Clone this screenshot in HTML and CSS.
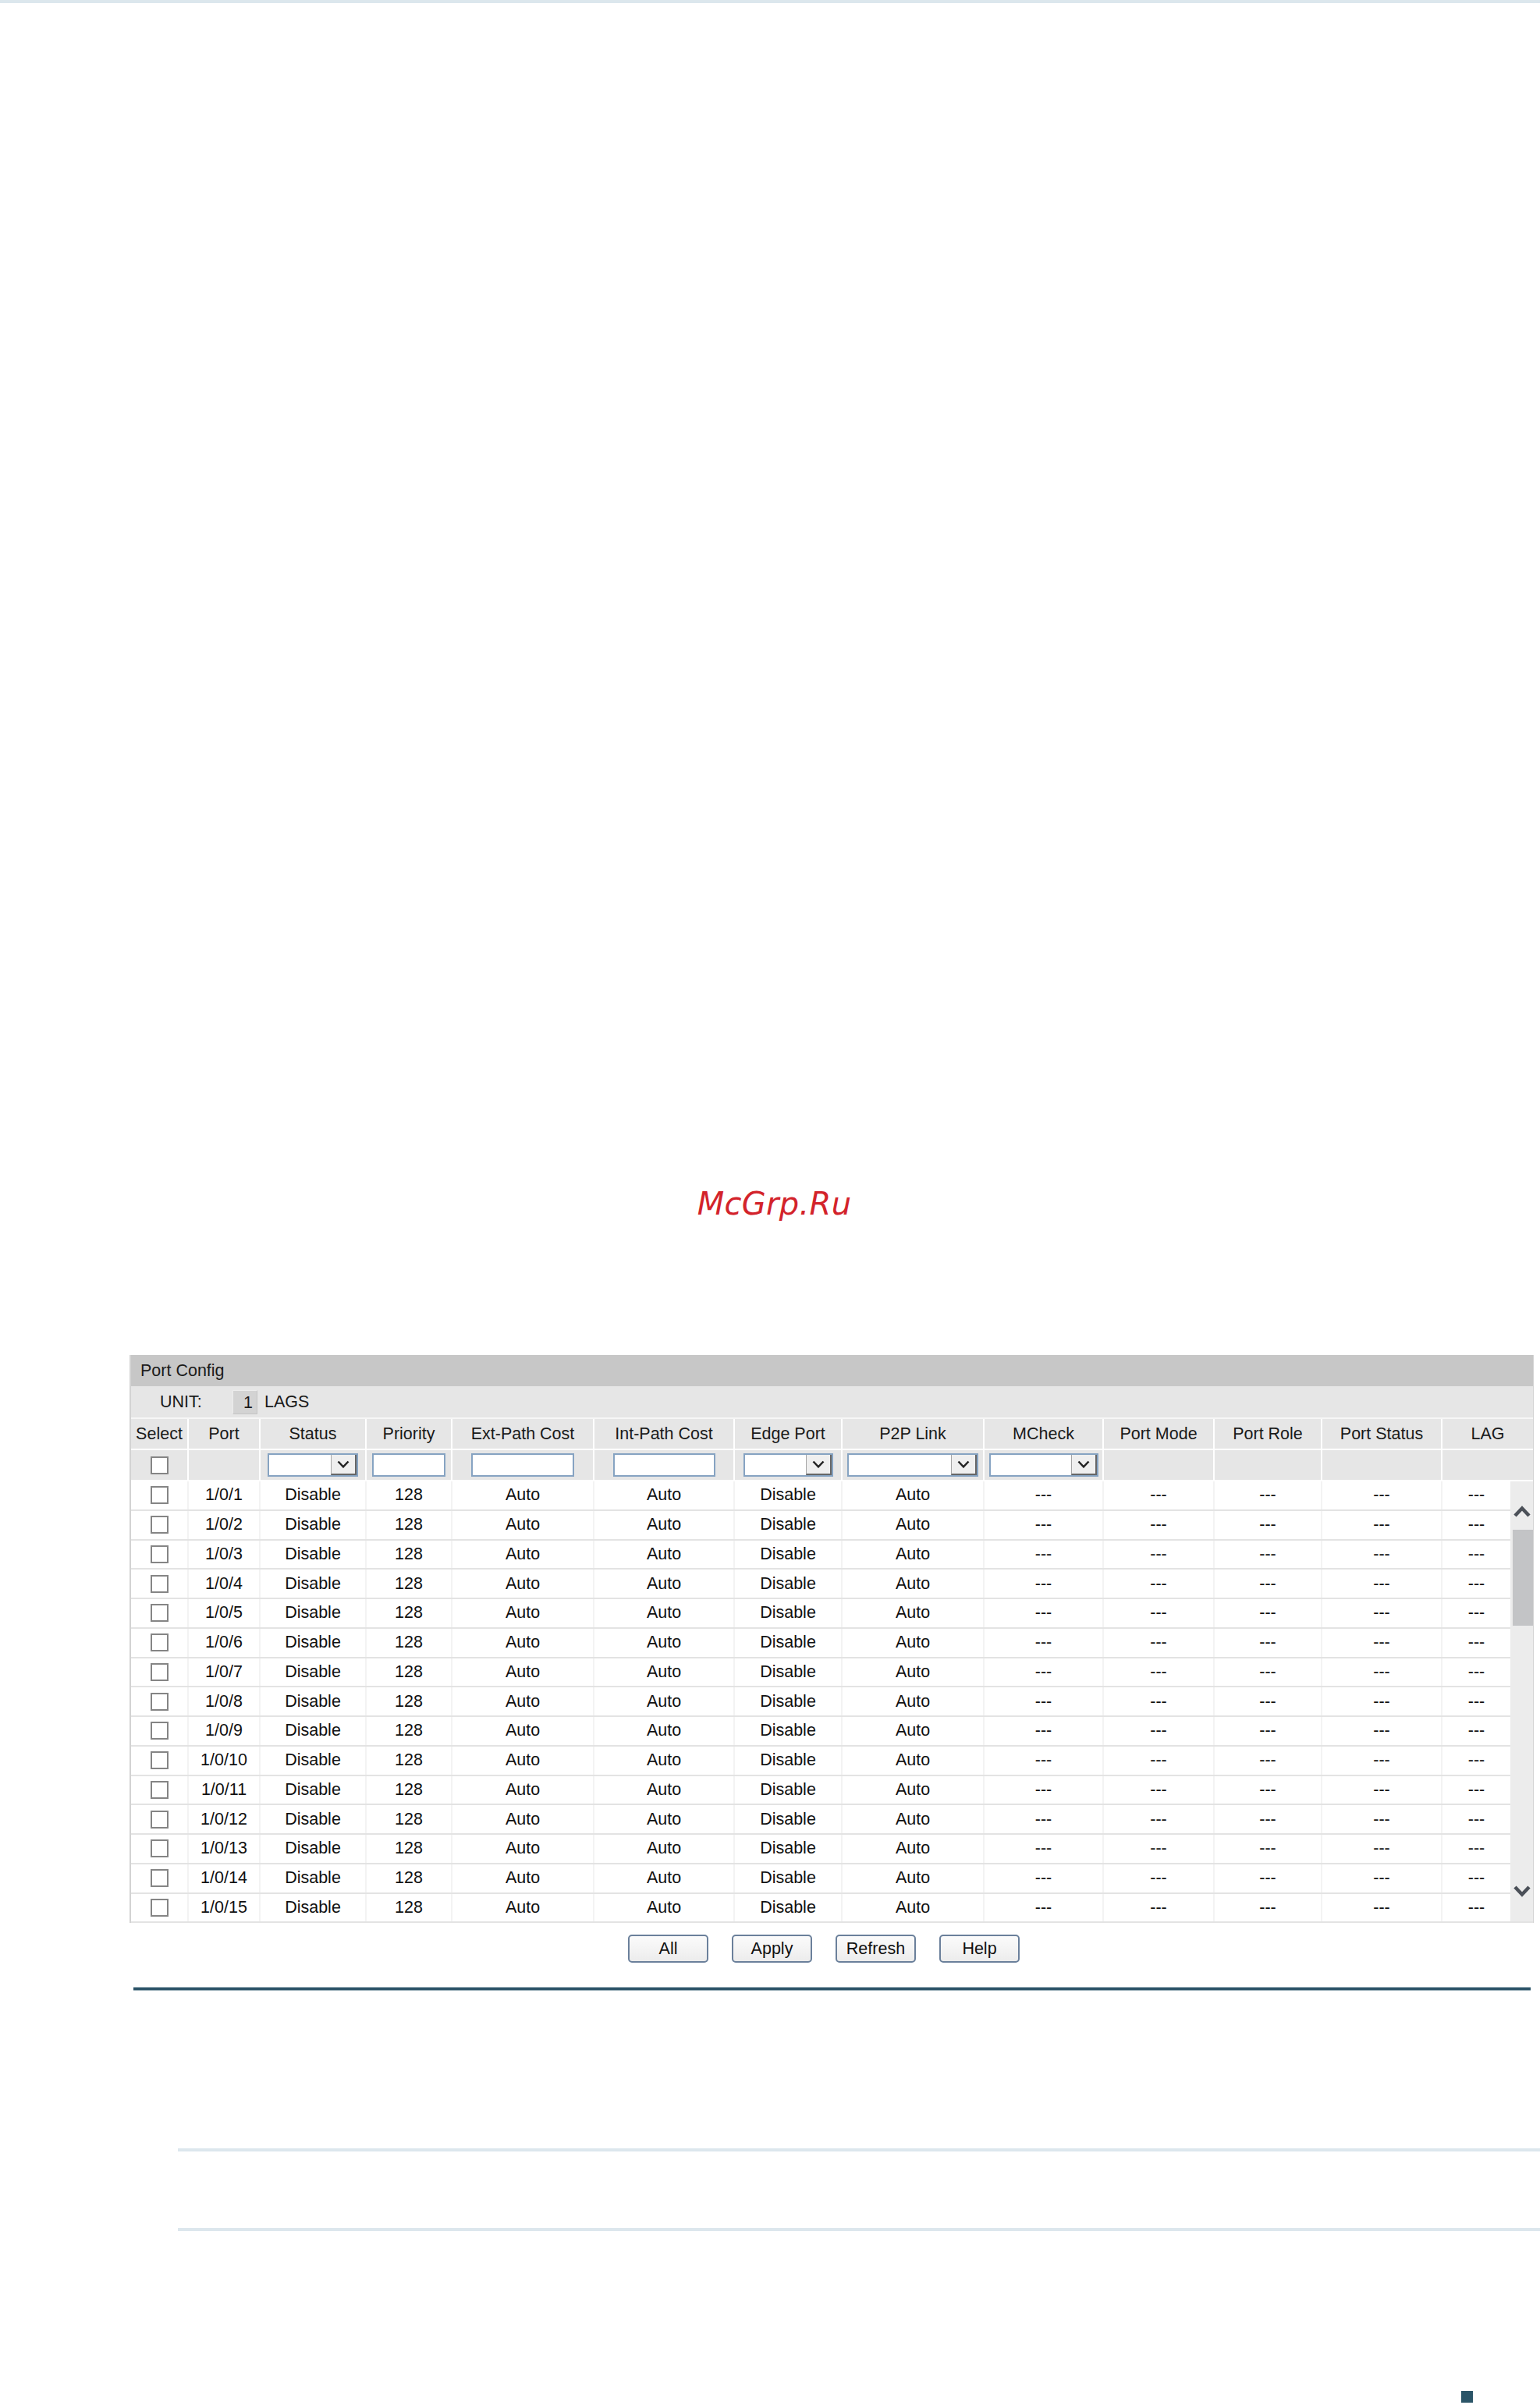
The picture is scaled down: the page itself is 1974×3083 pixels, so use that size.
FILE: index.html
```html
<!DOCTYPE html>
<html>
<head>
<meta charset="utf-8">
<title>Port Config</title>
<link rel="stylesheet" href="styles.css">
</head>
<body>
<div class="topbar"></div>
<div class="brand">McGrp.Ru</div>

<div class="panel">
  <div class="title">Port Config</div>
  <div class="unit-row">
    <span class="unit-label">UNIT:</span>
    <span class="unit-box">1</span>
    <span class="unit-lags">LAGS</span>
  </div>
  <div class="hrow head">
    <div class="c">Select</div><div class="c">Port</div><div class="c">Status</div><div class="c">Priority</div><div class="c">Ext-Path Cost</div><div class="c">Int-Path Cost</div><div class="c">Edge Port</div><div class="c">P2P Link</div><div class="c">MCheck</div><div class="c">Port Mode</div><div class="c">Port Role</div><div class="c">Port Status</div><div class="c">LAG</div>
  </div>
  <div class="hrow filter">
    <div class="c"><span class="chk"></span></div>
    <div class="c"></div>
    <div class="c"><span class="sel w116"><span class="sel-btn"><svg width="16" height="10" viewBox="0 0 16 10"><polyline points="1.5,1.5 8,8.3 14.5,1.5" fill="none" stroke="#222" stroke-width="2.5"/></svg></span></span></div>
    <div class="c"><span class="inp w94"></span></div>
    <div class="c"><span class="inp w132"></span></div>
    <div class="c"><span class="inp w131"></span></div>
    <div class="c"><span class="sel w115"><span class="sel-btn"><svg width="16" height="10" viewBox="0 0 16 10"><polyline points="1.5,1.5 8,8.3 14.5,1.5" fill="none" stroke="#222" stroke-width="2.5"/></svg></span></span></div>
    <div class="c"><span class="sel w168"><span class="sel-btn"><svg width="16" height="10" viewBox="0 0 16 10"><polyline points="1.5,1.5 8,8.3 14.5,1.5" fill="none" stroke="#222" stroke-width="2.5"/></svg></span></span></div>
    <div class="c"><span class="sel w140"><span class="sel-btn"><svg width="16" height="10" viewBox="0 0 16 10"><polyline points="1.5,1.5 8,8.3 14.5,1.5" fill="none" stroke="#222" stroke-width="2.5"/></svg></span></span></div>
    <div class="c"></div><div class="c"></div><div class="c"></div><div class="c"></div>
  </div>

  <div class="body">
    <div class="rows">
      <div class="drow"><div class="c"><span class="chk"></span></div><div class="c">1/0/1</div><div class="c">Disable</div><div class="c">128</div><div class="c">Auto</div><div class="c">Auto</div><div class="c">Disable</div><div class="c">Auto</div><div class="c">---</div><div class="c">---</div><div class="c">---</div><div class="c">---</div><div class="c">---</div></div>
      <div class="drow"><div class="c"><span class="chk"></span></div><div class="c">1/0/2</div><div class="c">Disable</div><div class="c">128</div><div class="c">Auto</div><div class="c">Auto</div><div class="c">Disable</div><div class="c">Auto</div><div class="c">---</div><div class="c">---</div><div class="c">---</div><div class="c">---</div><div class="c">---</div></div>
      <div class="drow"><div class="c"><span class="chk"></span></div><div class="c">1/0/3</div><div class="c">Disable</div><div class="c">128</div><div class="c">Auto</div><div class="c">Auto</div><div class="c">Disable</div><div class="c">Auto</div><div class="c">---</div><div class="c">---</div><div class="c">---</div><div class="c">---</div><div class="c">---</div></div>
      <div class="drow"><div class="c"><span class="chk"></span></div><div class="c">1/0/4</div><div class="c">Disable</div><div class="c">128</div><div class="c">Auto</div><div class="c">Auto</div><div class="c">Disable</div><div class="c">Auto</div><div class="c">---</div><div class="c">---</div><div class="c">---</div><div class="c">---</div><div class="c">---</div></div>
      <div class="drow"><div class="c"><span class="chk"></span></div><div class="c">1/0/5</div><div class="c">Disable</div><div class="c">128</div><div class="c">Auto</div><div class="c">Auto</div><div class="c">Disable</div><div class="c">Auto</div><div class="c">---</div><div class="c">---</div><div class="c">---</div><div class="c">---</div><div class="c">---</div></div>
      <div class="drow"><div class="c"><span class="chk"></span></div><div class="c">1/0/6</div><div class="c">Disable</div><div class="c">128</div><div class="c">Auto</div><div class="c">Auto</div><div class="c">Disable</div><div class="c">Auto</div><div class="c">---</div><div class="c">---</div><div class="c">---</div><div class="c">---</div><div class="c">---</div></div>
      <div class="drow"><div class="c"><span class="chk"></span></div><div class="c">1/0/7</div><div class="c">Disable</div><div class="c">128</div><div class="c">Auto</div><div class="c">Auto</div><div class="c">Disable</div><div class="c">Auto</div><div class="c">---</div><div class="c">---</div><div class="c">---</div><div class="c">---</div><div class="c">---</div></div>
      <div class="drow"><div class="c"><span class="chk"></span></div><div class="c">1/0/8</div><div class="c">Disable</div><div class="c">128</div><div class="c">Auto</div><div class="c">Auto</div><div class="c">Disable</div><div class="c">Auto</div><div class="c">---</div><div class="c">---</div><div class="c">---</div><div class="c">---</div><div class="c">---</div></div>
      <div class="drow"><div class="c"><span class="chk"></span></div><div class="c">1/0/9</div><div class="c">Disable</div><div class="c">128</div><div class="c">Auto</div><div class="c">Auto</div><div class="c">Disable</div><div class="c">Auto</div><div class="c">---</div><div class="c">---</div><div class="c">---</div><div class="c">---</div><div class="c">---</div></div>
      <div class="drow"><div class="c"><span class="chk"></span></div><div class="c">1/0/10</div><div class="c">Disable</div><div class="c">128</div><div class="c">Auto</div><div class="c">Auto</div><div class="c">Disable</div><div class="c">Auto</div><div class="c">---</div><div class="c">---</div><div class="c">---</div><div class="c">---</div><div class="c">---</div></div>
      <div class="drow"><div class="c"><span class="chk"></span></div><div class="c">1/0/11</div><div class="c">Disable</div><div class="c">128</div><div class="c">Auto</div><div class="c">Auto</div><div class="c">Disable</div><div class="c">Auto</div><div class="c">---</div><div class="c">---</div><div class="c">---</div><div class="c">---</div><div class="c">---</div></div>
      <div class="drow"><div class="c"><span class="chk"></span></div><div class="c">1/0/12</div><div class="c">Disable</div><div class="c">128</div><div class="c">Auto</div><div class="c">Auto</div><div class="c">Disable</div><div class="c">Auto</div><div class="c">---</div><div class="c">---</div><div class="c">---</div><div class="c">---</div><div class="c">---</div></div>
      <div class="drow"><div class="c"><span class="chk"></span></div><div class="c">1/0/13</div><div class="c">Disable</div><div class="c">128</div><div class="c">Auto</div><div class="c">Auto</div><div class="c">Disable</div><div class="c">Auto</div><div class="c">---</div><div class="c">---</div><div class="c">---</div><div class="c">---</div><div class="c">---</div></div>
      <div class="drow"><div class="c"><span class="chk"></span></div><div class="c">1/0/14</div><div class="c">Disable</div><div class="c">128</div><div class="c">Auto</div><div class="c">Auto</div><div class="c">Disable</div><div class="c">Auto</div><div class="c">---</div><div class="c">---</div><div class="c">---</div><div class="c">---</div><div class="c">---</div></div>
      <div class="drow"><div class="c"><span class="chk"></span></div><div class="c">1/0/15</div><div class="c">Disable</div><div class="c">128</div><div class="c">Auto</div><div class="c">Auto</div><div class="c">Disable</div><div class="c">Auto</div><div class="c">---</div><div class="c">---</div><div class="c">---</div><div class="c">---</div><div class="c">---</div></div>
    </div>
    <div class="scroll">
      <svg class="arrow up" width="22" height="15" viewBox="0 0 22 15"><polyline points="2,13 11,3.5 20,13" fill="none" stroke="#4b5058" stroke-width="4.5"/></svg>
      <div class="thumb"></div>
      <div class="spacer"></div>
      <svg class="arrow down" width="22" height="15" viewBox="0 0 22 15"><polyline points="2,2 11,11.5 20,2" fill="none" stroke="#4b5058" stroke-width="4.5"/></svg>
    </div>
  </div>
</div>

<div class="actions">
  <button class="btn">All</button>
  <button class="btn">Apply</button>
  <button class="btn">Refresh</button>
  <button class="btn">Help</button>
</div>

<div class="rule-dark"></div>
<div class="rule-light first"></div>
<div class="rule-light second"></div>
<div class="corner"></div>
</body>
</html>
```
FILE: styles.css
```css
* { box-sizing: border-box; }

body {
  margin: 0;
  background: #ffffff;
  font-family: "Liberation Sans", Arial, sans-serif;
  color: #111;
}

.topbar {
  height: 4px;
  background: #dce7ed;
}

.brand {
  margin-top: 1516px;
  height: 46px;
  line-height: 46px;
  text-align: center;
  padding-left: 11px;
  font-family: "DejaVu Sans", sans-serif;
  font-style: oblique;
  font-size: 40px;
  color: #d3232b;
  letter-spacing: 0.3px;
}

.panel {
  margin: 171px 0 0 166px;
  width: 1800px;
  border-left: 2px solid #d3d3d3;
  border-right: 1px solid #d3d3d3;
  font-size: 21.5px;
}

.title {
  height: 40px;
  line-height: 40px;
  background: #c7c7c7;
  padding-left: 12px;
  color: #1a1a1a;
}

.unit-row {
  height: 40px;
  background: #e6e6e6;
  display: flex;
  align-items: center;
  padding-left: 37px;
  color: #1a1a1a;
}

.unit-label { width: 93px; }

.unit-box {
  width: 32px;
  height: 31px;
  line-height: 31px;
  background: #d3d3d3;
  border: 1px solid #c4c4c4;
  border-top-color: #ececec;
  border-left-color: #ececec;
  text-align: right;
  padding-right: 5px;
  margin-right: 9px;
}

.hrow, .drow {
  display: grid;
}

.hrow {
  grid-template-columns: 74px 92px 136px 110px 182px 180px 138px 182px 153px 142px 138px 154px 116px;
  height: 40px;
  background: #e6e6e6;
  border-top: 2px solid #f6f6f6;
}

.hrow .c {
  border-right: 2px solid #ffffff;
  display: flex;
  align-items: center;
  justify-content: center;
  color: #1a1a1a;
}

.hrow .c:last-child { border-right: none; }

.filter { border-top: 2px solid #ffffff; }

.body {
  display: flex;
  border-top: 2px solid #ffffff;
}

.rows { width: 1768px; }

.drow {
  grid-template-columns: 74px 92px 136px 110px 182px 180px 138px 182px 153px 142px 138px 154px 87px;
  height: 37.75px;
  border-bottom: 2px solid #e3e3e3;
  background: #ffffff;
}

.drow .c {
  border-right: 2px solid #f3f3f3;
  display: flex;
  align-items: center;
  justify-content: center;
  color: #111;
}

.drow .c:last-child { border-right: none; }

.chk {
  display: block;
  width: 23px;
  height: 23px;
  border: 2px solid #858585;
  background: #fff;
}

.inp, .sel {
  display: block;
  height: 30px;
  border: 2px solid #86a3c2;
  background: #fff;
}

.sel {
  display: flex;
  justify-content: flex-end;
}

.sel-btn {
  width: 33px;
  height: 26px;
  background: #efefef;
  border-left: 1px solid #a6a6a6;
  border-right: 2px solid #666;
  border-bottom: 2px solid #666;
  display: flex;
  align-items: center;
  justify-content: center;
}

.w94 { width: 94px; }
.w115 { width: 115px; }
.w116 { width: 116px; }
.w131 { width: 131px; }
.w132 { width: 132px; }
.w140 { width: 140px; }
.w168 { width: 168px; }

.scroll {
  width: 29px;
  background: #ececec;
  display: flex;
  flex-direction: column;
  align-items: center;
  padding: 31px 0 31px 0;
  border-bottom: 2px solid #e3e3e3;
}

.arrow { display: block; flex: none; }

.thumb {
  width: 26px;
  height: 123px;
  margin-top: 16px;
  margin-left: 2px;
  background: #c3c4c6;
}

.spacer { flex: 1; }

.actions {
  width: 1768px;
  margin: 15px 0 0 168px;
  padding-left: 8px;
  display: flex;
  justify-content: center;
  gap: 30px;
}

.btn {
  width: 103px;
  height: 36px;
  padding: 0;
  border: 2px solid #6b809b;
  border-radius: 5px;
  background: linear-gradient(#fbfbfb, #ececec);
  font-family: "Liberation Sans", Arial, sans-serif;
  font-size: 21.5px;
  color: #111;
}

.rule-dark {
  margin: 31px 0 0 171px;
  width: 1791px;
  height: 5px;
  background: linear-gradient(#9cb0ba 0, #9cb0ba 1px, #2e5569 1px, #2e5569 4px, #9cb0ba 4px);
}

.rule-light {
  margin-left: 228px;
  height: 4px;
  background: #dce7ed;
}

.rule-light.first { margin-top: 202px; }
.rule-light.second { margin-top: 98px; }

.corner {
  margin: 205px 0 0 1873px;
  width: 15px;
  height: 15px;
  background: #2b5568;
}
```
